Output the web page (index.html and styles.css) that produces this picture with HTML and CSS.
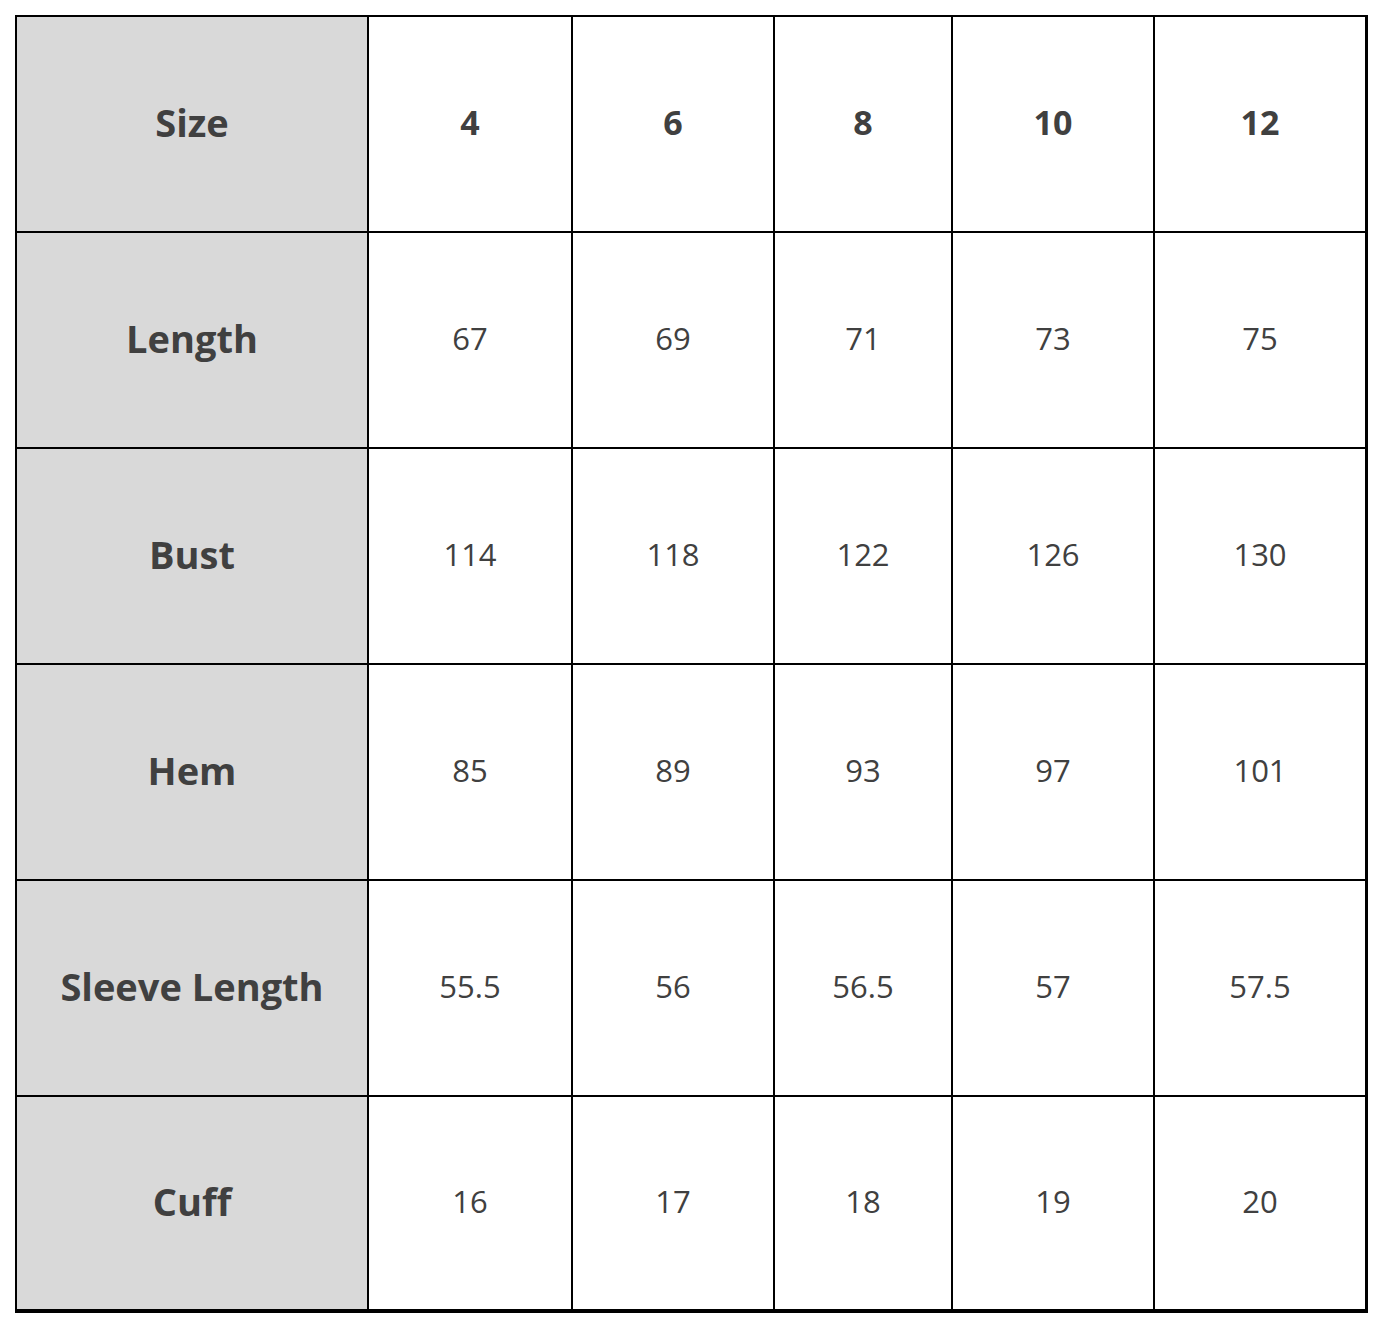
FILE: index.html
```html
<!DOCTYPE html>
<html>
<head>
<meta charset="utf-8">
<link rel="stylesheet" href="styles.css">
</head>
<body>
<div class="chart">
  <div class="cell head">Size</div>
  <div class="cell bold">4</div>
  <div class="cell bold">6</div>
  <div class="cell bold">8</div>
  <div class="cell bold">10</div>
  <div class="cell bold">12</div>

  <div class="cell head">Length</div>
  <div class="cell">67</div>
  <div class="cell">69</div>
  <div class="cell">71</div>
  <div class="cell">73</div>
  <div class="cell">75</div>

  <div class="cell head">Bust</div>
  <div class="cell">114</div>
  <div class="cell">118</div>
  <div class="cell">122</div>
  <div class="cell">126</div>
  <div class="cell">130</div>

  <div class="cell head">Hem</div>
  <div class="cell">85</div>
  <div class="cell">89</div>
  <div class="cell">93</div>
  <div class="cell">97</div>
  <div class="cell">101</div>

  <div class="cell head">Sleeve Length</div>
  <div class="cell">55.5</div>
  <div class="cell">56</div>
  <div class="cell">56.5</div>
  <div class="cell">57</div>
  <div class="cell">57.5</div>

  <div class="cell head">Cuff</div>
  <div class="cell">16</div>
  <div class="cell">17</div>
  <div class="cell">18</div>
  <div class="cell">19</div>
  <div class="cell">20</div>
</div>
</body>
</html>
```
FILE: styles.css
```css
html, body {
  margin: 0;
  background: #ffffff;
}
body {
  padding: 15px 0 0 15px;
  font-family: "Open Sans", "Noto Sans", sans-serif;
}
.chart {
  display: grid;
  width: fit-content;
  grid-template-columns: 350px 202px 200px 176px 200px 210px;
  grid-template-rows: 214px 214px 214px 214px 214px 212px;
  gap: 2px;
  padding: 2px 3px 4px 2px;
  background: #000000;
}
.cell {
  background: #ffffff;
  display: flex;
  align-items: center;
  justify-content: center;
  padding-bottom: 4px;
  font-size: 31px;
  color: #404040;
  font-weight: 400;
}
.cell.head {
  background: #d9d9d9;
  font-weight: 700;
  font-size: 38px;
}
.cell.bold {
  font-weight: 700;
  font-size: 34px;
}
```
